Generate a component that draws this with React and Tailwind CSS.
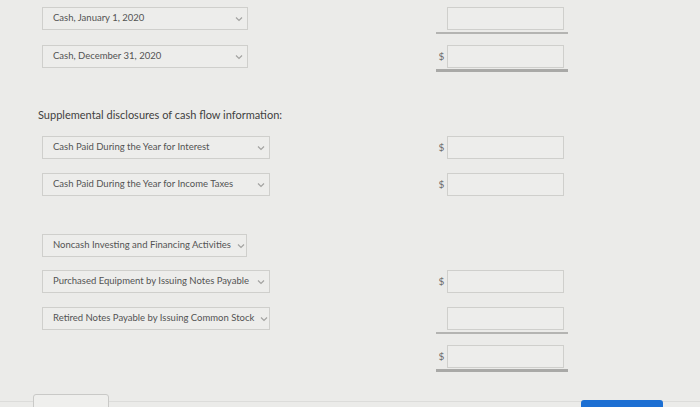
import React from "react";

function Chevron() {
  return (
    <svg width="8" height="6" viewBox="0 0 8 6" className="shrink-0">
      <path d="M1 1.5 L4 4.5 L7 1.5" fill="none" stroke="#a3a3a1" strokeWidth="1.2" />
    </svg>
  );
}

function Select({ label, w = "w-[228px]" }) {
  return (
    <div className={`${w} h-[23px] flex items-center justify-between gap-[6px] pl-[10px] pr-[4px] border border-[#cfcfcc] bg-[#ededeb] text-[9.5px] text-[#535353]`}>
      <span className="whitespace-nowrap">{label}</span>
      <Chevron />
    </div>
  );
}

function Box({ dollar, under }) {
  return (
    <div className="flex flex-col w-[132px]">
      <div className="flex items-center h-[23px]">
        <div className="w-[11px] text-[10px] text-[#6a6a6a] text-center">{dollar ? "$" : ""}</div>
        <div className="w-[117px] h-[23px] border border-[#cfcfcc] bg-[#ededeb]" />
      </div>
      {under === "single" && <div className="mt-[2px] h-[2px] bg-[#b4b4b2]" />}
      {under === "double" && <div className="mt-[1px] h-[3px] bg-[#a9a9a7]" />}
    </div>
  );
}

function Row({ label, w, dollar, under, box = true, className = "" }) {
  return (
    <div className={`flex items-start ${className}`}>
      <div className="w-[436px] pl-[42px]">
        {label ? <Select label={label} w={w} /> : <div className="h-[23px]" />}
      </div>
      {box && <Box dollar={dollar} under={under} />}
    </div>
  );
}

export default function App() {
  return (
    <div
      className="w-[700px] h-[407px] overflow-hidden bg-[#ebebe9] relative"
      style={{ fontFamily: "Lato, 'Open Sans', sans-serif" }}
    >
      <div className="flex flex-col pt-[7px]">
        <Row label="Cash, January 1, 2020" w="w-[206px]" under="single" />
        <Row label="Cash, December 31, 2020" w="w-[206px]" dollar under="double" className="mt-[11px]" />
        <div className="mt-[35px] pl-[38px] text-[11px] leading-[16px] text-[#3f3f3f]">Supplemental disclosures of cash flow information:</div>
        <Row label="Cash Paid During the Year for Interest" dollar className="mt-[13px]" />
        <Row label="Cash Paid During the Year for Income Taxes" dollar className="mt-[14px]" />
        <Row label="Noncash Investing and Financing Activities" w="w-[205px]" box={false} className="mt-[38px]" />
        <Row label="Purchased Equipment by Issuing Notes Payable" dollar className="mt-[13px]" />
        <Row label="Retired Notes Payable by Issuing Common Stock" under="single" className="mt-[14px]" />
        <Row dollar under="double" className="mt-[11px]" />
      </div>
      <div className="absolute left-0 right-0 top-[401px] h-[1px] bg-[#dcdcda]" />
      <div className="absolute left-[33px] top-[394px] w-[76px] h-[20px] rounded-[3px] border border-[#c9c9c7] bg-[#efefed]" />
      <div className="absolute left-[581px] top-[400px] w-[82px] h-[20px] rounded-[3px] bg-[#1c6fd3]" />
    </div>
  );
}
